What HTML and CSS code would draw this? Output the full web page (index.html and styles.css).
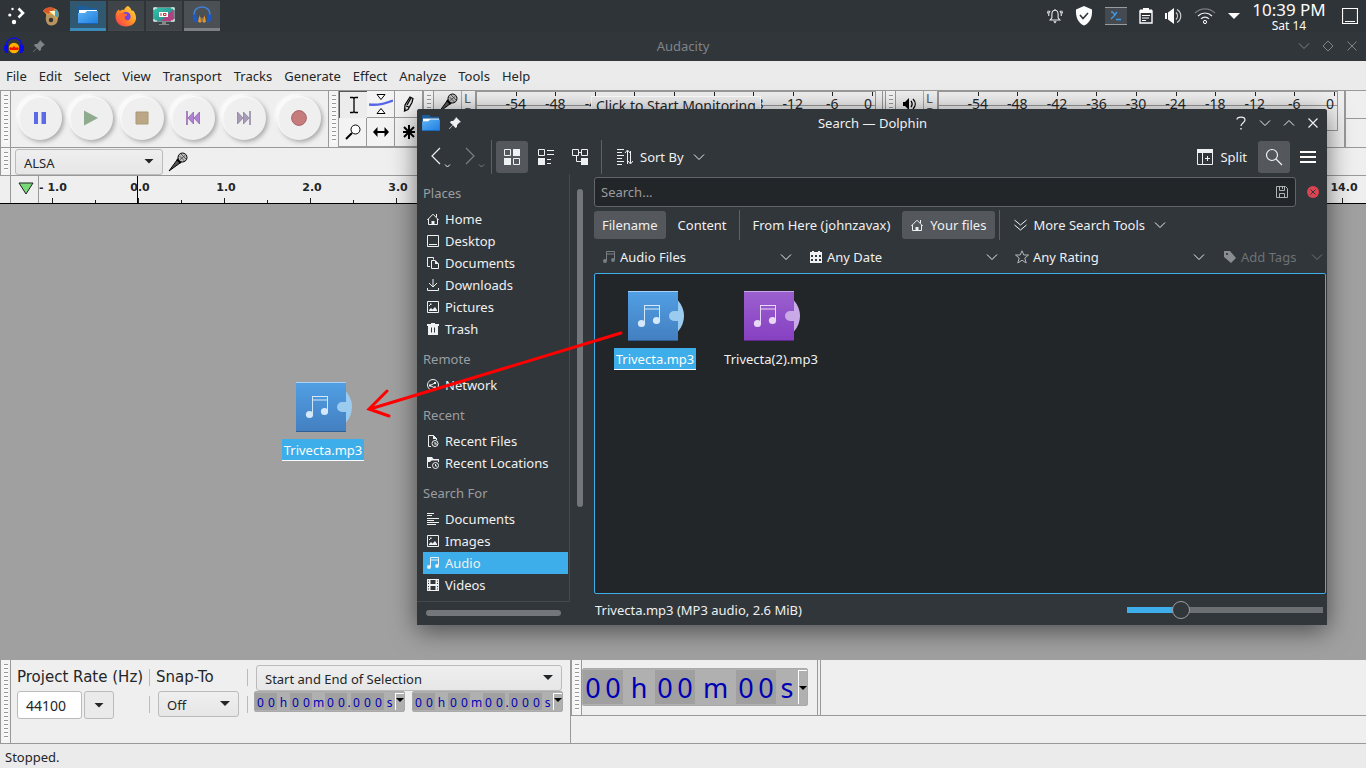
FILE: index.html
```
<!DOCTYPE html>
<html lang="en">
<head>
<meta charset="utf-8">
<title>Audacity</title>
<link rel="stylesheet" href="styles.css">
</head>
<body>
<svg class="defs" aria-hidden="true">
  <defs>
    <linearGradient id="blue" x1="0" y1="0" x2="0" y2="1"><stop offset="0" stop-color="#519fe4"/><stop offset="1" stop-color="#437fc0"/></linearGradient>
    <linearGradient id="purple" x1="0" y1="0" x2="0" y2="1"><stop offset="0" stop-color="#9b60cf"/><stop offset="1" stop-color="#8640c1"/></linearGradient>
    <linearGradient id="fold" x1="0" y1="0" x2="1" y2="1"><stop offset="0" stop-color="#5fb4f5"/><stop offset="1" stop-color="#1d7ce0"/></linearGradient>
    <linearGradient id="fire" x1="1" y1="0" x2="0" y2="1"><stop offset="0" stop-color="#ffe14a"/><stop offset=".45" stop-color="#ff9a22"/><stop offset="1" stop-color="#f52c56"/></linearGradient>
    <linearGradient id="teal" x1="0" y1="0" x2="1" y2="1"><stop offset="0" stop-color="#36c4ae"/><stop offset="1" stop-color="#257f80"/></linearGradient>
  </defs>
  <symbol id="chev" viewBox="0 0 12 12"><path d="M1 3.500 6 8.500l5-5" fill="none" stroke="currentColor"/></symbol>
  <symbol id="pin" viewBox="0 0 12 12"><path d="M7 0l5 5-1.500.5L8 8v2L6.500 11 4 8.200.500 12 0 11.500 3.800 8 1 5.500 2 4h2l2.500-2.500z" fill="currentColor"/></symbol>
  <symbol id="folder" viewBox="0 0 20 18"><path d="M0 0h8l2 2h9v5H0z" fill="#1d5f9e"/><path d="M1 4h18v5H1z" fill="#fff"/><path d="M0 7h7l2-2h11v13H0z" fill="url(#fold)"/><path d="M0 17.500h20" stroke="#1b64b5"/></symbol>
  <symbol id="home" viewBox="0 0 12 12"><path d="M.3 7 6 1.200 11.700 7M1.500 6v5.500h9V6M9.500 1v3" fill="none" stroke="currentColor"/><path d="M4.500 11V8h3v3z" fill="currentColor"/></symbol>
  <symbol id="image" viewBox="0 0 12 12"><path d="M.5.5h11v11H.5z" fill="none" stroke="currentColor"/><path d="M2 10V9l2-2 1.500 1.500L8 6l2 3v1zM3 2.500h1.500V4H3zM2 4h1v1H2z" fill="currentColor"/></symbol>
  <symbol id="note" viewBox="0 0 12 12"><path d="M3.500 10V.5h8V8.500M3.500 3h8" fill="none" stroke="currentColor"/><circle cx="2" cy="10" r="2" fill="currentColor"/><circle cx="10" cy="9" r="1.900" fill="currentColor"/></symbol>
  <symbol id="notes" viewBox="0 0 56 50"><g fill="currentColor"><path d="M16 14h16v16h-1V15H17v17h-1z"/><path d="M17 17.500h14v1H17z"/><circle cx="13.500" cy="32.500" r="3.600"/><circle cx="28.500" cy="29.500" r="3.600"/></g></symbol>
  <symbol id="mic" viewBox="0 0 20 20"><path d="M1 19 9 8l3 3z" fill="#555" stroke="#000"/><path d="M9 7l4 4" stroke="#000" stroke-width="2"/><circle cx="14.500" cy="5.500" r="4.500" fill="#bbb" stroke="#000"/><path d="M11.500 4l5 5M13 2l5 5M17.500 3l-6 5" stroke="#444" stroke-width=".8"/></symbol>
</svg>

<div class="screen">
  <header class="panel">
    <button class="launcher" aria-label="Application launcher"><svg width="18" height="18" viewBox="0 0 18 18"><g fill="#fff"><circle cx="4.500" cy="2" r="1.200"/><circle cx="1.800" cy="8" r="1.600"/><circle cx="6" cy="15" r="2.200"/></g><path d="M10.500 1.500 15 6l-4.500 4.500" fill="none" stroke="#fff" stroke-width="2.600"/></svg></button>
    <button class="launcher" aria-label="Painter"><svg width="18" height="19" viewBox="0 0 18 19"><path d="M4 9c0-4 4-4 6-2l5 3c2 3 0 8-5 8.500C5 19 3 14 4 9z" fill="#b8945f"/><path d="M1 4C5-1 13 0 16 4c2 4 0 8-2 9-1-4-4-7-9-5z" fill="#e9a03a"/><path d="M1 4c4-5 9-4 12-2L6 7z" fill="#d8562e"/><path d="M13 2c4 2 4 6 3 9l-4-3z" fill="#45a3c6"/><path d="M7 4l6 0 0 5z" fill="#fff7c8"/><circle cx="9" cy="13" r="2.200" fill="#2f3439"/></svg></button>
    <button class="task task-blue" aria-label="Dolphin"><svg width="20" height="18"><use href="#folder"/></svg></button>
    <button class="task" aria-label="Firefox"><svg width="22" height="22" viewBox="0 0 22 22"><path d="M13 1c2 1 3 3 3.500 4.500 1 0 2 0 3 2C24 16 18 21.500 11 21.500S.5 17 .5 11c0-3 1.500-5 3-6.500L5 6c1-1 3-1.500 4-1 1-2 2-3.500 4-4z" fill="url(#fire)"/><circle cx="11" cy="11.500" r="4.600" fill="#7542e5"/><path d="M4 9c3-2 5 0 8 0 1 1-1 2-2 2.500-1 2 1 4 4 3.500-5 4-10 0-10-6z" fill="#ff6a2b"/></svg></button>
    <button class="task" aria-label="Screen recorder"><svg width="22" height="20" viewBox="0 0 22 20"><path d="M0 1h22v15H0z" fill="#75908f"/><path d="M1 2h20v13H1z" fill="url(#teal)"/><path d="M20 4v11H8z" fill="#b0407f"/><path d="M1 4V2h3M18 2h3v2M1 13v2h3M18 15h3v-2" fill="none" stroke="#fff"/><path d="M6 6h9v5H6z" fill="#fff"/><path d="M8 7v3M10.500 7.500h2.500v2h-2.500z" stroke="#b33" fill="none"/><path d="M9 16h4v2h3v1H6v-1h3z" fill="#888"/></svg></button>
    <button class="task task-active" aria-label="Audacity"><svg width="20" height="20" viewBox="0 0 20 20"><path d="M2.500 12C1 5 5 2 10 2s9 3 7.500 10" fill="none" stroke="#3f7fd6" stroke-width="1.600"/><path d="M1 10l3-1.500 1.500 9C2 18 0 14 1 10zM19 10l-3-1.500-1.500 9C18 18 20 14 19 10z" fill="#1d59c4"/><path d="M6 17l1.500-7 1.500 7zM14 17l-1.500-7-1.500 7z" fill="#f08a1c"/><path d="M8 12v6M10 13v4M12 12v6" stroke="#e8b14a" stroke-width=".8"/></svg></button>
    <div class="tray">
      <svg width="16" height="18" viewBox="0 0 18 18"><path d="M3.500 13.500h11L12.500 11V7C12.500 4 11 2.500 9 2.500S5.500 4 5.500 7v4zM9 2.500V1M3.500 3 2 6v3M14.500 3 16 6v3M1.500 3 .5 6M16.500 3l1 3" fill="none" stroke="#eff0f1" stroke-width="1.200"/><path d="M7 15h4l-2 2.500z" fill="#eff0f1"/></svg>
      <svg width="18" height="20" viewBox="0 0 18 20"><path d="M9 0l8 3.500C17.500 11 15 17 9 19.500 3 17 .5 11 1 3.500z" fill="#fcfcfc"/><path d="M5 9l3 3.500L13 7" fill="none" stroke="#31363b" stroke-width="1.600"/></svg>
      <svg width="22" height="18" viewBox="0 0 22 18"><path d="M0 0h22v18H0z" fill="#444a50"/><path d="M0 .5h22M0 17.500h22" stroke="#9a9da0"/><path d="M6 5h1.500L10 8l-4 4M12 5 9 9M11 12.500h5" fill="none" stroke="#3d9be9" stroke-width="1.300"/></svg>
      <svg width="14" height="16" viewBox="0 0 14 16"><path d="M1 3v12h12V3z" fill="none" stroke="#fcfcfc" stroke-width="1.400"/><path d="M1 1.500h3V0h6v1.500h3V5H1z" fill="#fcfcfc"/><path d="M3 7.500h8M3 10h7M3 12.500h4" stroke="#fcfcfc"/></svg>
      <svg width="17" height="18" viewBox="0 0 17 18"><path d="M0 6h2v6H0zM3 5.500 9 1v16l-6-4.500z" fill="#fcfcfc"/><path d="M11 5.500c2 2 2 5 0 7M12 2.500c5 3 5 10 0 13" fill="none" stroke="#ccc" stroke-width="1.200"/></svg>
      <svg width="22" height="18" viewBox="0 0 22 18"><path d="M1 6C7 .5 15 .5 21 6" fill="none" stroke="#777c80" stroke-width="1.200"/><path d="M4 9c4-4 10-4 14 0M7 12c2-2.500 6-2.500 8 0" fill="none" stroke="#eee" stroke-width="1.200"/><circle cx="11" cy="15" r="1.600" fill="none" stroke="#fff"/></svg>
      <svg width="12" height="6" viewBox="0 0 12 6"><path d="M0 0h12L6 6z" fill="#fcfcfc"/></svg>
      <time class="clock"><span class="hour">10:39 PM</span><span class="date">Sat 14</span></time>
      <svg width="16" height="16" viewBox="0 0 16 16"><path d="M.5.5h15v15H.5zM3 13.500h10" fill="none" stroke="#fcfcfc" stroke-width="1.200"/></svg>
    </div>
  </header>

  <main class="audacity">
    <div class="titlebar">
      <div class="title-icons">
        <svg width="20" height="17" viewBox="0 0 20 17"><path d="M2.500 12C1 4 6 1 10 1s9 3 7.500 11" fill="none" stroke="#1010e0" stroke-width="1.600"/><path d="M0 9l4-2v9H2L0 13zM20 9l-4-2v9h2l2-3z" fill="#0808e8"/><circle cx="10" cy="11" r="5.200" fill="#ffb000"/><path d="M5 11l2-1 1 1 2-2 2 2 1-1 2 1-1 2H6z" fill="#f01000"/></svg>
        <svg width="12" height="12"><use href="#pin"/></svg>
      </div>
      <h1>Audacity</h1>
      <div class="title-buttons">
        <button aria-label="Minimize"><svg width="12" height="12"><use href="#chev"/></svg></button>
        <button aria-label="Maximize"><svg width="12" height="12" viewBox="0 0 12 12"><path d="M6 1l5 5-5 5-5-5z" fill="none" stroke="currentColor"/></svg></button>
        <button aria-label="Close"><svg width="12" height="12" viewBox="0 0 12 12"><path d="M1.500 1.500l9 9m0-9l-9 9" stroke="currentColor"/></svg></button>
      </div>
    </div>
    <nav class="menubar">
      <button>File</button><button>Edit</button><button>Select</button><button>View</button><button>Transport</button><button>Tracks</button><button>Generate</button><button>Effect</button><button>Analyze</button><button>Tools</button><button>Help</button>
    </nav>

    <div class="toolrow toolrow-main">
      <div class="grip"></div>
      <div class="transport">
        <button class="round" aria-label="Pause"><svg width="14" height="14" viewBox="0 0 14 14"><path d="M1 1h4v12H1zM8.500 1h4.500v12H8.500z" fill="#5b6be8"/></svg></button>
        <button class="round" aria-label="Play"><svg width="14" height="16" viewBox="0 0 14 16"><path d="M0 0.500 14 8 0 15.500z" fill="#8fab8f"/></svg></button>
        <button class="round" aria-label="Stop"><svg width="14" height="14" viewBox="0 0 14 14"><path d="M1 1h12v12H1z" fill="#bba785" stroke="#ab9875"/></svg></button>
        <button class="round" aria-label="Skip to start"><svg width="14" height="14" viewBox="0 0 14 14"><path d="M1 0v14" stroke="#8a55a8" stroke-width="1.400"/><path d="M7.500 1v12L2 7zM13.500 1v12L8 7z" fill="#b07fd6" stroke="#8d68a8" stroke-width=".8"/></svg></button>
        <button class="round" aria-label="Skip to end"><svg width="14" height="14" viewBox="0 0 14 14"><path d="M13 0v14" stroke="#837b95" stroke-width="1.400"/><path d="M.5 1v12L6 7zM6.500 1v12L12 7z" fill="#a89cb8" stroke="#8b8398" stroke-width=".8"/></svg></button>
        <button class="round record" aria-label="Record"><svg width="16" height="16" viewBox="0 0 16 16"><circle cx="8" cy="8" r="7.400" fill="#c67c7c" stroke="#a86464"/></svg></button>
      </div>
      <div class="grip"></div>
      <div class="tools">
        <button class="pressed" aria-label="Selection"><svg width="12" height="18" viewBox="0 0 12 18"><path d="M2 1.500h3l1 1 1-1h3M6 2v14M2 16.500h3l1-1 1 1h3" fill="none" stroke="#000" stroke-width="1.300"/></svg></button>
        <button aria-label="Envelope"><svg width="24" height="20" viewBox="0 0 24 20"><path d="M0 10.500c8 1 14 0 24-4" fill="none" stroke="#5566e6" stroke-width="2.400"/><path d="M8 .5h8l-4 5zM8 19.500h8l-4-5z" fill="#fff" stroke="#000"/></svg></button>
        <button aria-label="Draw"><svg width="12" height="16" viewBox="0 0 12 16"><path d="M1.500 15l.5-6 5-8 3 1.500-1 4-4 7zM3 10l3 1M2 15v-3M8 2l-4 7" fill="#ddd" stroke="#000" stroke-width="1.200"/></svg></button>
        <button aria-label="Zoom"><svg width="16" height="16" viewBox="0 0 16 16"><path d="M1 15l6-6" stroke="#000" stroke-width="2"/><circle cx="10.500" cy="5.500" r="4.500" fill="#fff" stroke="#000"/></svg></button>
        <button aria-label="Time shift"><svg width="16" height="10" viewBox="0 0 16 10"><path d="M1 5h14" stroke="#000" stroke-width="2"/><path d="M4.500 0v10L0 5zM11.500 0v10L16 5z"/></svg></button>
        <button aria-label="Multi-tool"><svg width="14" height="14" viewBox="0 0 14 14"><path d="M7 0v14M2 2l10 10M12 2 2 12M1 7h12" stroke="#000" stroke-width="2"/></svg></button>
      </div>
      <div class="meter">
        <div class="grip"></div>
        <button class="meter-btn" aria-label="Recording meter"><svg width="20" height="20"><use href="#mic"/></svg></button>
        <div class="lr"><span>L</span><span>R</span></div>
        <div class="scale">
          <span>-54</span><span>-48</span><span>-42</span><span></span><span></span><span></span><span>-18</span><span>-12</span><span>-6</span><span class="zero">0</span>
          <button class="monitor">Click to Start Monitoring</button>
        </div>
      </div>
      <div class="meter">
        <div class="grip"></div>
        <button class="meter-btn speaker" aria-label="Playback meter"><svg width="14" height="14" viewBox="0 0 14 14"><path d="M0 5h2l4-4v12L2 9H0z"/><path d="M8 4c1.500 2 1.500 4 0 6M10 2c3 3 3 7 0 10" fill="none" stroke="#000" stroke-width="1.300"/></svg></button>
        <div class="lr"><span>L</span><span>R</span></div>
        <div class="scale"><span>-54</span><span>-48</span><span>-42</span><span>-36</span><span>-30</span><span>-24</span><span>-18</span><span>-12</span><span>-6</span><span class="zero">0</span></div>
      </div>
      <div class="row-rest"></div>
    </div>

    <div class="toolrow toolrow-device">
      <div class="grip"></div>
      <div class="drop drop-host"><select aria-label="Audio host"><option>ALSA</option></select></div>
      <svg width="20" height="20"><use href="#mic"/></svg>
    </div>

    <div class="ruler">
      <div class="ruler-head"></div>
      <button class="ruler-pin" aria-label="Pinned playhead"><svg width="16" height="13" viewBox="0 0 16 13"><path d="M1 1h14L8 12z" fill="#77d977" stroke="#222"/></svg></button>
      <div class="ruler-scale"><span class="first">- 1.0</span><span>0.0</span><span>1.0</span><span>2.0</span><span>3.0</span><span class="last">14.0</span></div>
    </div>

    <section class="tracks" aria-label="Tracks">
      <figure class="file dragged">
        <svg width="56" height="50" viewBox="0 0 56 50"><path d="M0 0h50v50H0z" fill="url(#blue)"/><path d="M0 .5h50" stroke="#a8d0f2"/><path d="M0 49.500h50" stroke="#2d5f94"/><path d="M50 9.500a23 23 0 0 1 0 31V30h-4a5 5 0 0 1 0-10h4z" fill="#9ccbf0"/><use href="#notes" color="#d3e8fa"/></svg>
        <figcaption class="selected">Trivecta.mp3</figcaption>
      </figure>
    </section>

    <div class="bottom">
      <div class="selection">
        <div class="grip"></div>
        <div class="rate">
          <label for="rate">Project Rate (Hz)</label>
          <div class="combo"><input id="rate" value="44100"><button aria-label="Choose rate"><i class="tri"></i></button></div>
        </div>
        <div class="splits"><i></i><i></i></div>
        <div class="snap">
          <label for="snap">Snap-To</label>
          <div class="drop"><select id="snap"><option>Off</option></select></div>
        </div>
        <div class="splits"><i></i><i></i></div>
        <div class="range">
          <div class="drop"><select aria-label="Selection mode"><option>Start and End of Selection</option></select></div>
          <div class="timers">
            <div class="timer"><b>0</b><b>0</b><span>h</span><b>0</b><b>0</b><span>m</span><b>0</b><b>0</b><em>.</em><b>0</b><b>0</b><b>0</b><span class="sec">s</span><button aria-label="Start format"><i class="tri"></i></button></div>
            <div class="timer"><b>0</b><b>0</b><span>h</span><b>0</b><b>0</b><span>m</span><b>0</b><b>0</b><em>.</em><b>0</b><b>0</b><b>0</b><span class="sec">s</span><button aria-label="End format"><i class="tri"></i></button></div>
          </div>
        </div>
      </div>
      <div class="time-area">
        <div class="time-row">
          <div class="grip"></div>
          <div class="timer timer-big"><b>0</b><b>0</b><span>h</span><b>0</b><b>0</b><span class="min">m</span><b>0</b><b>0</b><span class="sec">s</span><button aria-label="Time format"><i class="tri"></i></button></div>
          <div class="time-end"></div>
        </div>
      </div>
    </div>
    <footer class="status">Stopped.</footer>
  </main>

  <section class="dolphin" aria-label="Search — Dolphin">
    <div class="titlebar dtitle">
      <div class="title-icons">
        <svg width="18" height="16"><use href="#folder"/></svg>
        <svg width="12" height="12"><use href="#pin"/></svg>
      </div>
      <h2>Search — Dolphin</h2>
      <div class="title-buttons">
        <button aria-label="Help"><svg width="12" height="14" viewBox="0 0 12 14"><path d="M2 3.500C2 .5 10 0 10 4c0 2.500-4 3-4 6" fill="none" stroke="currentColor" stroke-width="1.200"/><path d="M5.300 12h1.400v1.500H5.300z" fill="currentColor"/></svg></button>
        <button aria-label="Minimize"><svg width="12" height="12"><use href="#chev"/></svg></button>
        <button aria-label="Maximize"><svg class="flip" width="12" height="12"><use href="#chev"/></svg></button>
        <button aria-label="Close"><svg width="12" height="12" viewBox="0 0 12 12"><path d="M1.500 1.500l9 9m0-9l-9 9" stroke="currentColor" stroke-width="1.200"/></svg></button>
      </div>
    </div>
    <div class="dtools">
      <button class="nav" aria-label="Back"><svg width="20" height="22" viewBox="0 0 20 22"><path d="M9 2 1 10l8 8" fill="none" stroke="currentColor" stroke-width="1.200"/><path d="M14 18.500l2.500 2.500 2.500-2.500" fill="none" stroke="currentColor"/></svg></button>
      <button class="nav dim" aria-label="Forward"><svg width="20" height="22" viewBox="0 0 20 22"><path d="M1 2l8 8-8 8" fill="none" stroke="currentColor" stroke-width="1.200"/><path d="M14 18.500l2.500 2.500 2.500-2.500" fill="none" stroke="currentColor"/></svg></button>
      <i class="vsep"></i>
      <button class="tool on" aria-label="Icons view"><svg width="16" height="16" viewBox="0 0 16 16"><path d="M.5.5h6v6h-6zM9.500 9.500h6v6h-6z" fill="none" stroke="currentColor"/><path d="M9 0h7v7H9zM0 9h7v7H0z" fill="currentColor"/></svg></button>
      <button class="tool" aria-label="Compact view"><svg width="16" height="16" viewBox="0 0 16 16"><path d="M.5.5h6v6h-6zM9 1.500h7M9 5.500h7M9 10.500h4M9 14.500h4" fill="none" stroke="currentColor"/><path d="M0 9h7v7H0z" fill="currentColor"/></svg></button>
      <button class="tool" aria-label="Details view"><svg width="16" height="16" viewBox="0 0 16 16"><path d="M.5.5h6v6h-6zM9.500.5h6v6h-6zM6.500 3.500h3M4.500 6.500v6H9" fill="none" stroke="currentColor"/><path d="M9 9h7v7H9z" fill="currentColor"/></svg></button>
      <i class="vsep"></i>
      <button class="sort"><svg width="16" height="16" viewBox="0 0 16 16"><path d="M0 .5h7M0 3.500h5M0 6.500h7M0 9.500h5M0 12.500h7M0 15.500h5M10.500 15V2M8 4l2.500-3L13 4M13.500 2v12M11 12l2.500 3 2.500-3" fill="none" stroke="currentColor"/></svg>Sort By<svg class="chev" width="12" height="12"><use href="#chev"/></svg></button>
      <button class="split"><svg width="16" height="16" viewBox="0 0 16 16"><path d="M.5.5h15v15H.5zM5.500 4v11M8 9.500h5M10.500 7v5" fill="none" stroke="currentColor"/><path d="M0 0h16v4H0z" fill="currentColor"/></svg>Split</button>
      <button class="tool on" aria-label="Search"><svg width="18" height="18" viewBox="0 0 18 18"><circle cx="7" cy="7" r="5.500" fill="none" stroke="currentColor" stroke-width="1.200"/><path d="M11 11l6 6" stroke="currentColor" stroke-width="1.200"/></svg></button>
      <button class="burger" aria-label="Menu"><svg width="16" height="12" viewBox="0 0 16 12"><path d="M0 1h16M0 6h16M0 11h16" stroke="#fcfcfc" stroke-width="2"/></svg></button>
    </div>
    <div class="dbody">
      <aside class="side">
        <div class="side-top">
          <nav class="places">
            <h3>Places</h3>
            <a href="#"><svg width="12" height="12"><use href="#home"/></svg>Home</a>
            <a href="#"><svg width="12" height="12" viewBox="0 0 12 12"><path d="M.5.5h11v11H.5zM2 9.500h8" fill="none" stroke="currentColor"/></svg>Desktop</a>
            <a href="#"><svg width="12" height="12" viewBox="0 0 12 12"><path d="M3 9.500H.5V.5h6v2M4.500 3.500H8L11.500 7v4.500h-7z" fill="none" stroke="currentColor"/><path d="M8 3l4 4H8z" fill="currentColor"/></svg>Documents</a>
            <a href="#"><svg width="12" height="12" viewBox="0 0 12 12"><path d="M6 0v8M2 4l4 4 4-4M.5 9v2.500h11V9" fill="none" stroke="currentColor"/></svg>Downloads</a>
            <a href="#"><svg width="12" height="12"><use href="#image"/></svg>Pictures</a>
            <a href="#"><svg width="12" height="12" viewBox="0 0 12 12"><path d="M0 1h4V0h4v1h4v2H0zM1 3h10v9H1z" fill="currentColor"/><path d="M4.500 4.500v5M7.500 4.500v5" stroke="#31363b"/></svg>Trash</a>
            <h3>Remote</h3>
            <a href="#"><svg width="12" height="12" viewBox="0 0 12 12"><circle cx="6" cy="6" r="5.500" fill="none" stroke="currentColor"/><path d="M3 6.500 8 4M3 6.500 8 9" stroke="currentColor"/><path d="M2 5.500h2v2H2zM7 3h2v2H7zM7 7.500h2v2H7z" fill="currentColor"/></svg>Network</a>
            <h3>Recent</h3>
            <a href="#"><svg width="12" height="12" viewBox="0 0 12 12"><path d="M4 11.500H1.500V.5h5L9.500 3.500V5" fill="none" stroke="currentColor"/><circle cx="8" cy="8.500" r="3" fill="none" stroke="currentColor"/><path d="M6 0l4 4H6zM7.500 7h1v1.500H10v1H7.500z" fill="currentColor"/></svg>Recent Files</a>
            <a href="#"><svg width="12" height="12" viewBox="0 0 12 12"><path d="M4 10.500H.5V3h11v2" fill="none" stroke="currentColor"/><path d="M0 0h5l1.500 2H12v1H5L3 5H0z" fill="currentColor"/><circle cx="8.500" cy="8.500" r="3" fill="none" stroke="currentColor"/><path d="M8.500 7v2H10" fill="none" stroke="currentColor"/></svg>Recent Locations</a>
            <h3>Search For</h3>
            <a href="#"><svg width="12" height="12" viewBox="0 0 12 12"><path d="M0 .5h7M0 2.500h5M0 5.500h12M0 7.500h7M0 9.500h12M0 11.500h9" stroke="currentColor"/></svg>Documents</a>
            <a href="#"><svg width="12" height="12"><use href="#image"/></svg>Images</a>
            <a href="#" class="current"><svg width="12" height="12"><use href="#note"/></svg>Audio</a>
            <a href="#"><svg width="12" height="12" viewBox="0 0 12 12"><path d="M0 0h12v12H0z" fill="currentColor"/><path d="M3.500 1h5v4h-5zM3.500 7h5v4h-5zM1 1.500h1v1H1zM1 4h1v1H1zM1 7h1v1H1zM1 9.500h1v1H1zM10 1.500h1v1h-1zM10 4h1v1h-1zM10 7h1v1h-1zM10 9.500h1v1h-1z" fill="#31363b"/></svg>Videos</a>
          </nav>
          <div class="vbar"><i></i></div>
        </div>
        <div class="hbar"><i></i></div>
      </aside>
      <div class="content">
        <div class="searchline">
          <div class="field"><input type="text" aria-label="Search" placeholder="Search..."><svg width="12" height="12" viewBox="0 0 12 12"><path d="M.5.5h9l2 2v9H.5zM3.500.5v4h5v-4M3.500 11V7.500h5V11M6.500 1v2" fill="none" stroke="#b0b3b5"/></svg></div>
          <button class="stop" aria-label="Quit searching"><svg width="12" height="12" viewBox="0 0 12 12"><circle cx="6" cy="6" r="6" fill="#da4453"/><path d="M3.500 3.500l5 5m0-5l-5 5" stroke="#31363b"/></svg></button>
        </div>
        <div class="filters">
          <button class="on">Filename</button><button class="wide">Content</button><i class="vsep"></i><button class="wide">From Here (johnzavax)</button><button class="on yours"><svg width="12" height="12"><use href="#home"/></svg>Your files</button><i class="vsep"></i><button class="more"><svg width="13" height="12" viewBox="0 0 13 12"><path d="M.5 1l6 5 6-5M.5 6l6 5 6-5" fill="none" stroke="currentColor"/></svg>More Search Tools<svg class="chev" width="12" height="12"><use href="#chev"/></svg></button>
        </div>
        <div class="facets">
          <button><svg class="dim" width="12" height="12"><use href="#note"/></svg><span>Audio Files</span><svg width="12" height="12"><use href="#chev"/></svg></button>
          <button><svg width="12" height="12" viewBox="0 0 12 12"><path d="M0 1h2V0h2v1h4V0h2v1h2v11H0z" fill="currentColor"/><path d="M1 4h2v2H1zM5 4h2v2H5zM9 4h2v2H9zM1 8h2v2H1zM5 8h2v2H5zM9 8h2v2H9z" fill="#31363b"/></svg><span>Any Date</span><svg width="12" height="12"><use href="#chev"/></svg></button>
          <button class="rating"><svg width="14" height="14" viewBox="0 0 14 14"><path d="M7 .8 8.800 5h4.700L9.800 8l1.400 5L7 10.200 2.800 13l1.400-5L.5 5h4.700z" fill="none" stroke="#b5b8ba"/></svg><span>Any Rating</span><svg width="12" height="12"><use href="#chev"/></svg></button>
          <button class="tags" disabled><svg width="12" height="12" viewBox="0 0 12 12"><path d="M0 0h6l6 7-5 5-7-6z" fill="#8a8e91"/><circle cx="3" cy="3" r="1.100" fill="#31363b"/></svg><span>Add Tags</span><svg width="12" height="12"><use href="#chev"/></svg></button>
        </div>
        <div class="view">
          <figure class="file">
            <svg width="56" height="50" viewBox="0 0 56 50"><path d="M0 0h50v50H0z" fill="url(#blue)"/><path d="M0 .5h50" stroke="#a8d0f2"/><path d="M0 49.500h50" stroke="#2d5f94"/><path d="M50 9.500a23 23 0 0 1 0 31V30h-4a5 5 0 0 1 0-10h4z" fill="#9ccbf0"/><use href="#notes" color="#d3e8fa"/></svg>
            <figcaption class="selected">Trivecta.mp3</figcaption>
          </figure>
          <figure class="file">
            <svg width="56" height="50" viewBox="0 0 56 50"><path d="M0 0h50v50H0z" fill="url(#purple)"/><path d="M0 .5h50" stroke="#c8a5e8"/><path d="M0 49.500h50" stroke="#5f2a8c"/><path d="M50 9.500a23 23 0 0 1 0 31V30h-4a5 5 0 0 1 0-10h4z" fill="#c9a9e6"/><use href="#notes" color="#e8d8f5"/></svg>
            <figcaption>Trivecta(2).mp3</figcaption>
          </figure>
        </div>
        <div class="dstatus"><span>Trivecta.mp3 (MP3 audio, 2.6 MiB)</span><input type="range" aria-label="Icon size" min="0" max="100" value="25"></div>
      </div>
    </div>
  </section>

  <svg class="arrow" width="260" height="90" viewBox="0 0 260 90" aria-hidden="true"><path d="M256 4 5 80M22 62 4 80l20 7" fill="none" stroke="#f00" stroke-width="3" stroke-linecap="round"/></svg>
</div>
</body>
</html>
```

FILE: styles.css
```
* { box-sizing: border-box; }
body { margin: 0; font: 13px/18px "Noto Sans", sans-serif; color: #232629; }
button, input, select { font: inherit; color: inherit; border: 0; background: none; padding: 0; margin: 0; border-radius: 0; outline: 0; }
h1, h2, h3, figure { margin: 0; font-size: 13px; font-weight: 400; }
svg { display: block; flex: none; }
a { color: inherit; text-decoration: none; }
.defs { position: absolute; width: 0; height: 0; }
.flip { transform: scaleY(-1); }

.screen { position: relative; display: flex; flex-direction: column; height: 100vh; overflow: hidden; background: #a0a0a0; }

/* desktop panel */
.panel { display: flex; flex: none; height: 32px; background: #2f3439; color: #fcfcfc; }
.launcher { display: grid; place-items: center; width: 34px; }
.task { display: grid; place-items: center; width: 36px; height: 30px; margin: 1px 2px 0 0; background: #3f4449; border-bottom: 1px solid #45494e; }
.task-blue { background: #315871; border-bottom: 3px solid #3a8abb; margin-left: 2px; }
.task-active { background: #4b5054; border-bottom: 3px solid #7d8184; }
.tray { display: flex; align-items: center; gap: 12px; margin-left: auto; padding-right: 8px; }
.clock { display: flex; flex-direction: column; align-items: center; width: 74px; margin-right: 4px; white-space: nowrap; }
.hour { font-size: 17px; line-height: 20px; }
.date { font-size: 12px; line-height: 12px; }

/* window frames */
.titlebar { display: grid; grid-template-columns: 1fr auto 1fr; align-items: center; flex: none; height: 29px; padding: 0 8px 2px 4px; background: #31363b; color: #7f8487; }
.title-icons, .title-buttons { display: flex; align-items: center; }
.title-icons { gap: 9px; }
.title-buttons { justify-content: flex-end; gap: 12px; }
.titlebar h1, .titlebar h2 { padding-left: 4px; }
.audacity { display: flex; flex: 1; flex-direction: column; min-height: 0; }
.menubar { display: flex; flex: none; height: 29px; background: #ebebeb; }
.menubar button { padding: 0 6px; }

/* audacity toolbars */
.grip { flex: none; width: 11px; border: 1px solid #999; border-width: 0 1px; background: repeating-linear-gradient(#999 0 1px, #fafafa 1px 4px) center / 4px calc(100% - 8px) no-repeat #f4f4f4; }
.toolrow { display: flex; flex: none; background: #efefef; border-top: 1px solid #999; }
.toolrow-main { height: 57px; }
.transport { display: flex; align-items: center; gap: 7px; width: 317px; padding: 0 0 2px 7px; }
.round { display: grid; place-items: center; width: 44px; height: 44px; border-radius: 50%; background: #efefef; box-shadow: 2px 2px 4px #aaa, -2px -2px 3px #fff, inset 1px 1px 2px #fff; }
.record { margin-left: 4px; }
.tools { display: grid; grid-template-columns: repeat(3, 28px); grid-template-rows: 27px 29px; }
.tools button { display: grid; place-items: center; background: #f3f3f3; border: 1px solid #999; border-width: 0 1px 1px 0; }
.tools .pressed { background: #ececec; border: 1px solid #555; border-width: 1px 0 0 1px; }
.meter { display: flex; width: 460px; border-right: 1px solid #999; }
.meter + .meter { margin-left: 2px; }
.meter-btn { display: flex; justify-content: center; width: 28px; height: 28px; padding-top: 2px; border-right: 1px solid #aaa; }
.speaker { padding-top: 6px; }
.lr { display: flex; flex-direction: column; width: 13px; padding-left: 2px; color: #555; line-height: 14px; }
.scale { position: relative; display: flex; flex: 1; align-self: flex-start; height: 40px; margin-right: 6px; padding: 2px 3px 0 19px; border: 1px solid #999; border-width: 1px 1px 1px 2px; font-size: 14px; background: linear-gradient(#999, #999) 0 13px / 100% 1px no-repeat; }
.scale span { position: relative; flex: 1; text-align: center; line-height: 20px; }
.scale span::before { content: ""; position: absolute; left: 50%; top: -2px; width: 1px; height: 4px; background: #222; }
.scale .zero { flex: none; width: 20px; text-align: right; }
.scale .zero::before { left: 100%; }
.monitor { position: absolute; left: 114px; top: 4px; height: 20px; padding: 0 4px; background: #efefef; border: 1px solid #fff; white-space: nowrap; line-height: 18px; }
.row-rest { flex: 1; border-left: 1px solid #999; background: linear-gradient(#999, #999) 0 27px / 100% 1px no-repeat; }
.toolrow-device { height: 28px; align-items: center; gap: 4px; }
.toolrow-device .grip { align-self: stretch; }
.toolrow-device svg { margin-left: 1px; }
.drop { position: relative; display: block; }
.drop select { appearance: none; width: 100%; height: 26px; padding: 2px 8px 0; border: 1px solid #bbb; border-radius: 3px; background: linear-gradient(#efefef, #e6e6e6); }
.drop::after, .tri { content: ""; width: 10px; height: 5px; background: #232629; clip-path: polygon(0 0, 100% 0, 50% 100%); }
.drop::after { position: absolute; right: 9px; top: 10px; pointer-events: none; }
.drop-host { width: 148px; }

.ruler { display: flex; flex: none; height: 29px; background: #efefef; border-top: 1px solid #999; border-bottom: 1px solid #000; }
.ruler-head { width: 11px; border-right: 1px solid #999; }
.ruler-pin { display: grid; place-items: center; width: 28px; padding: 0 0 2px 2px; border-right: 1px solid #999; }
.ruler-scale { display: flex; flex: 1; font: bold 11px/24px "DejaVu Sans", sans-serif; background: linear-gradient(#000, #000) 98px 0 / 1px 100% no-repeat, linear-gradient(90deg, #222 1px, transparent 1px) 13px 100% / 86px 5px repeat-x, linear-gradient(90deg, #222 1px, transparent 1px) 13px 100% / 43px 3px repeat-x; }
.ruler-scale span { width: 86px; text-align: center; }
.ruler-scale .first { width: 58px; text-align: left; }
.ruler-scale .last { width: 28px; margin: 0 8px 0 auto; }

.tracks { flex: 1; min-height: 0; background: #a0a0a0; }
.file { display: flex; flex-direction: column; align-items: center; gap: 7px; width: 116px; }
.file svg { margin-left: 2px; }
.file figcaption { height: 22px; padding: 2px; white-space: nowrap; }
.file .selected { background: #3daee9; color: #fcfcfc; border-bottom: 1px solid #fcfcfc; }
.dragged { position: absolute; left: 265px; top: 382px; }

/* selection and time toolbars */
.bottom { display: flex; flex: none; height: 84px; background: #efefef; border-bottom: 1px solid #999; }
.selection { display: flex; flex: none; width: 571px; border-right: 1px solid #999; }
.selection label { display: block; height: 26px; font: 15px/24px "DejaVu Sans", sans-serif; white-space: nowrap; }
.rate { flex: none; width: 138px; padding: 5px 0 0 6px; }
.combo { display: flex; gap: 2px; }
.combo input { width: 65px; height: 28px; padding: 0 8px; background: #fff; border: 1px solid #bbb; border-radius: 3px; font-size: 14px; }
.combo button { display: grid; place-items: center; width: 30px; height: 28px; border: 1px solid #bbb; border-radius: 3px; background: #eaeaea; }
.splits { display: flex; flex: none; flex-direction: column; gap: 10px; width: 1px; padding-top: 9px; }
.splits i { width: 1px; height: 17px; background: #bbb; }
.snap { flex: none; width: 97px; padding: 5px 8px 0 6px; }
.snap .drop { margin-left: 2px; }
.range { flex: 1; padding: 5px 6px 0 6px; }
.range .drop { margin: 0 2px; }
.timers { display: flex; gap: 7px; }
.timer { display: flex; flex: none; height: 21px; padding: 1px 0; background: #b0b0b0; border: 1px solid #aaa; border-radius: 2px; color: #0000b4; font-size: 12px; line-height: 19px; text-align: center; }
.timer b { width: 11px; font-weight: 400; background: #a0a0a0; }
.timer span { width: 13px; }
.timer em { width: 4px; font-style: normal; }
.timer .sec { width: 11px; }
.timer button { display: grid; width: 9px; padding-top: 4px; border: 1px solid #fff; border-width: 1px 0 0 1px; }
.timer .tri { width: 8px; height: 4px; background: #000; }
.time-area { flex: 1; }
.time-row { display: flex; height: 56px; border-bottom: 1px solid #999; }
.timer-big { height: 38px; margin: 8px 9px 0 0; font-size: 27px; line-height: 36px; }
.timer-big b { width: 20px; }
.timer-big span { width: 32px; }
.timer-big .min { width: 41px; }
.timer-big .sec { width: 22px; }
.timer-big button { padding-top: 15px; }
.time-end { width: 4px; border: 1px solid #999; border-width: 0 1px; }
.status { flex: none; height: 24px; padding: 4px 5px; background: #ebebeb; }

/* dolphin */
.dolphin { position: absolute; left: 417px; top: 109px; display: flex; flex-direction: column; width: 910px; height: 516px; border-radius: 3px 3px 0 0; background: #31363b; color: #eff0f1; box-shadow: 0 5px 26px rgba(0, 0, 0, .55); }
.dtitle { padding-left: 5px; color: #eff0f1; border-radius: 3px 3px 0 0; }
.vsep { flex: none; width: 1px; background: #5c6165; }
.dim { color: #7a7f82; }
.on { background: #54575b; }
.dtools { display: flex; flex: none; align-items: center; height: 36px; padding: 2px 11px 0 12px; }
.dtools .vsep { height: 34px; }
.nav { width: 34px; padding-left: 2px; }
.nav + .vsep { margin: 0 4px 0 -6px; }
.tool { display: grid; place-items: center; width: 32px; height: 32px; margin-right: 2px; border-radius: 3px; }
.tool + .vsep { margin-left: 3px; }
.sort, .split { display: flex; align-items: center; gap: 7px; }
.sort { padding-left: 15px; }
.sort .chev { margin-left: 2px; }
.split { margin: 0 11px 0 auto; }
.burger { margin-left: 8px; }
.dbody { display: flex; flex: 1; min-height: 0; }
.side { display: flex; flex-direction: column; width: 177px; }
.side-top { display: flex; flex: 1; min-height: 0; }
.places { width: 153px; padding: 0 1px 0 6px; border-right: 1px solid #44494d; border-bottom: 1px solid #44494d; overflow: hidden; }
.places h3 { height: 34px; padding-top: 10px; color: #9a9ea1; }
.places a { display: flex; align-items: center; gap: 6px; height: 22px; padding-left: 4px; white-space: nowrap; }
.places .current { background: #3daee9; }
.vbar { padding: 15px 0 0 7px; }
.vbar i { display: block; width: 6px; height: 318px; border-radius: 3px; background: #73777a; }
.hbar { height: 23px; padding: 8px 0 0 9px; }
.hbar i { display: block; width: 135px; height: 6px; border-radius: 3px; background: #73777a; }
.content { display: flex; flex: 1; flex-direction: column; min-width: 0; padding: 3px 1px 0 0; }
.searchline { display: flex; }
.field { display: flex; flex: 1; align-items: center; height: 30px; padding: 0 7px 0 6px; background: #232629; border: 1px solid #616569; border-radius: 3px; }
.field input { flex: 1; height: 100%; }
.field input::placeholder { color: #9a9d9f; opacity: 1; }
.stop { width: 30px; padding-left: 11px; }
.filters { display: flex; align-items: center; height: 28px; margin-top: 4px; white-space: nowrap; }
.filters button { display: flex; align-items: center; gap: 6px; height: 28px; padding: 0 8px; border-radius: 3px; }
.filters .wide { padding: 0 12px; }
.filters .vsep { height: 30px; margin-left: 1px; }
.filters .yours { gap: 7px; padding: 0 9px; }
.filters .on + .vsep { margin: 0 6px 0 4px; }
.more .chev { margin-left: 3px; }
.facets { display: grid; grid-template-columns: 207px 206px 207px 1fr; align-items: center; height: 34px; padding-top: 2px; }
.facets button { display: flex; align-items: center; gap: 5px; padding: 0 9px; height: 24px; }
.facets .rating { gap: 4px; padding-left: 8px; }
.facets span { flex: 1; text-align: left; }
.facets .tags { padding: 0 3px 0 10px; color: #6e7275; }
.view { display: flex; flex: 1; align-items: flex-start; padding: 17px 2px; background: #232629; border: 1px solid #3daee9; border-radius: 2px; }
.dstatus { display: flex; align-items: center; justify-content: space-between; height: 31px; padding: 0 3px 0 1px; }
.dstatus input { appearance: none; width: 196px; height: 18px; background: linear-gradient(90deg, #3daee9 27%, #6b6f72 27%) center / 100% 6px no-repeat; }
.dstatus input::-webkit-slider-thumb { appearance: none; width: 18px; height: 18px; border: 1px solid #9a9d9f; border-radius: 50%; background: #31363b; }

.arrow { position: absolute; left: 365px; top: 329px; pointer-events: none; }
```
